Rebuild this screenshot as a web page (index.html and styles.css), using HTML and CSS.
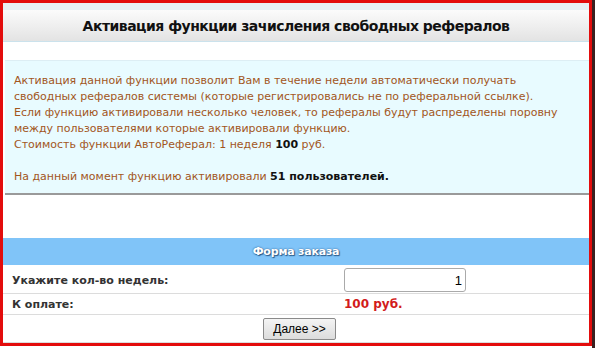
FILE: index.html
```html
<!DOCTYPE html>
<html lang="ru">
<head>
<meta charset="utf-8">
<link rel="stylesheet" href="styles.css">
</head>
<body>
<div class="page">
  <div class="frame">
    <div class="top-band"></div>
    <div class="title-bar">Активация функции зачисления свободных рефералов</div>
    <div class="spacer-a"></div>
    <div class="info">
      <p>Активация данной функции позволит Вам в течение недели автоматически получать<br>
      свободных рефералов системы (которые регистрировались не по реферальной ссылке).<br>
      Если функцию активировали несколько человек, то рефералы будут распределены поровну<br>
      между пользователями которые активировали функцию.<br>
      Стоимость функции АвтоРеферал: 1 неделя <b>100</b> руб.</p>
      <p>На данный момент функцию активировали <b>51 пользователей.</b></p>
    </div>
    <div class="spacer-b"></div>
    <div class="form-head">Форма заказа</div>
    <div class="row row-weeks">
      <div class="label">Укажите кол-во недель:</div>
      <div class="value"><input class="weeks" type="text" value="1"></div>
    </div>
    <div class="row row-pay">
      <div class="label">К оплате:</div>
      <div class="value price">100 руб.</div>
    </div>
    <div class="row row-btn">
      <button class="next" type="button">Далее &gt;&gt;</button>
    </div>
  </div>
  <div class="edge"></div>
</div>
</body>
</html>
```

FILE: styles.css
```css
html, body {
  margin: 0;
  padding: 0;
  background: #ffffff;
}
body {
  width: 595px;
  height: 348px;
  overflow: hidden;
  font-family: "DejaVu Sans", Verdana, sans-serif;
}
.page {
  display: flex;
  height: 348px;
}
.frame {
  box-sizing: border-box;
  width: 592px;
  height: 346px;
  border: 3px solid #e30c0c;
  display: flex;
  flex-direction: column;
  background: #ffffff;
}
.edge {
  width: 3px;
  height: 348px;
  background: #3a2020;
}
.top-band {
  height: 7px;
  background: #e8eff3;
}
.title-bar {
  height: 32px;
  box-sizing: border-box;
  background: linear-gradient(#fbfbfb, #e3e3e3);
  border-bottom: 1px solid #cbe2ec;
  display: flex;
  align-items: center;
  justify-content: center;
  font-weight: bold;
  font-size: 14px;
  color: #111111;
  letter-spacing: -0.5px;
}
.spacer-a {
  height: 18px;
}
.info {
  margin: 0 0 0 2px;
  height: 135px;
  box-sizing: border-box;
  background: #e8fbff;
  border-top: 1px solid #ddeef4;
  border-bottom: 2px solid #9a9a9a;
  padding: 12px 9px 0;
  font-size: 11px;
  line-height: 16px;
  color: #a2561c;
}
.info p {
  margin: 0 0 16px;
}
.info b {
  color: #111111;
}
.spacer-b {
  height: 43px;
}
.form-head {
  height: 27px;
  flex: none;
  background: #80c4f8;
  display: flex;
  align-items: center;
  justify-content: center;
  color: #ffffff;
  font-weight: bold;
  font-size: 11px;
  letter-spacing: -0.2px;
  text-shadow: 0 0 2px #2a5a8a, 1px 1px 1px #2a5a8a;
}
.row {
  display: flex;
  align-items: center;
  border-bottom: 1px solid #dcdcdc;
  font-size: 11px;
  font-weight: bold;
  color: #333333;
  flex: none;
}
.row-weeks {
  height: 29px;
  box-sizing: border-box;
  padding-top: 2px;
}
.row-pay {
  height: 21px;
  box-sizing: border-box;
}
.row-btn {
  flex: 1;
  box-sizing: border-box;
  justify-content: center;
  align-items: flex-start;
  padding-top: 3px;
}
.label {
  width: 341px;
  padding-left: 9px;
  box-sizing: border-box;
}
.value {
  flex: 1;
}
.weeks {
  display: block;
  box-sizing: border-box;
  width: 122px;
  height: 24px;
  border: 1px solid #aaaaaa;
  border-radius: 3px;
  text-align: right;
  font-family: "Liberation Sans", Arial, sans-serif;
  font-size: 13px;
  padding: 0 3px;
  color: #000;
}
.price {
  color: #d21b1b;
  font-size: 12px;
}
.next {
  box-sizing: border-box;
  width: 73px;
  height: 22px;
  margin-left: 7px;
  border: 1px solid #8a8a8a;
  border-radius: 2px;
  background: linear-gradient(#f4f4f4, #dcdcdc);
  font-family: "Liberation Sans", Arial, sans-serif;
  font-size: 12px;
  color: #000;
  padding: 0;
}
```
